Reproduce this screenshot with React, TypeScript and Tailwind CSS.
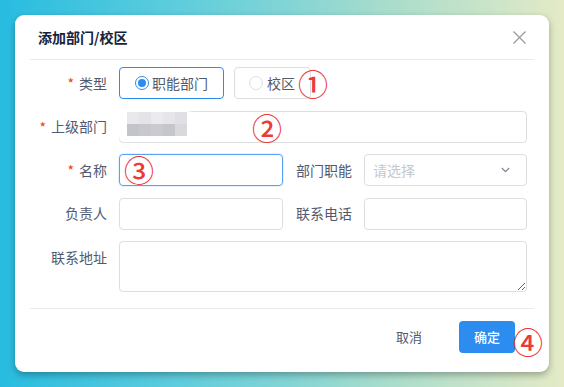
import React from "react";

const FONT = '"Noto Sans CJK SC", "Noto Sans", sans-serif';

function Label({ text, required, w }: { text: string; required?: boolean; w: string }) {
  return (
    <div className={`${w} h-8 flex items-center justify-end pr-3 text-[14px] text-[#515a6e]`}>
      {required && <span className="text-[#ed4014] text-[14px] mr-[5px] leading-none">*</span>}
      <span>{text}</span>
    </div>
  );
}

function Mark({ ch, className }: { ch: string; className: string }) {
  return (
    <span
      className={`absolute w-[30px] h-[30px] flex items-center justify-center text-[30px] font-medium leading-none text-[#ec3a3a] ${className}`}
    >
      {ch}
    </span>
  );
}

export default function App() {
  return (
    <div
      className="relative w-[564px] h-[387px] overflow-hidden pt-[15px] pl-[15px] bg-[linear-gradient(90deg,#28bce1_0%,#5fcddc_32%,#80d4d6_50%,#a5dccc_67%,#e4eac6_100%)]"
      style={{ fontFamily: FONT }}
    >
      <div className="w-[534px] h-[357px] bg-white rounded-[9px] shadow-[0_3px_7px_rgba(0,0,0,0.3)] flex flex-col">
        {/* header */}
        <div className="h-[44px] flex items-center justify-between pl-[23px] pr-[23px]">
          <span className="text-[14px] font-bold text-[#17233d]">添加部门/校区</span>
          <svg width="13" height="13" viewBox="0 0 13 13">
            <path d="M0.5 0.5 L12.5 12.5 M12.5 0.5 L0.5 12.5" stroke="#999999" strokeWidth="1.2" />
          </svg>
        </div>
        <div className="mx-[15px] border-b border-[#e8eaec]" />

        {/* form */}
        <div className="pl-[15px] pt-[7px] pb-[16px] flex flex-col gap-[11.5px]">
          <div className="flex">
            <Label text="类型" required w="w-[89px]" />
            <div className="flex gap-[10px]">
              <div className="h-8 pl-[15px] pr-[15px] border border-[#2d8cf0] rounded flex items-center gap-[3px] text-[14px] text-[#515a6e]">
                <span className="w-[14px] h-[14px] rounded-full border border-[#2d8cf0] flex items-center justify-center">
                  <span className="w-[8px] h-[8px] rounded-full bg-[#2d8cf0]" />
                </span>
                <span>职能部门</span>
              </div>
              <div className="h-8 pl-[14px] pr-[15px] border border-[#dcdee2] rounded flex items-center gap-[4px] text-[14px] text-[#515a6e]">
                <span className="w-[14px] h-[14px] rounded-full border border-[#dcdee2] bg-white" />
                <span>校区</span>
              </div>
            </div>
          </div>

          <div className="flex">
            <Label text="上级部门" required w="w-[89px]" />
            <div className="w-[408px] h-8 border border-[#dcdee2] rounded" />
          </div>

          <div className="grid grid-cols-[89px_164px_81px_163px]">
            <Label text="名称" required w="w-[89px]" />
            <div className="h-8 border border-[#57a3f3] rounded shadow-[0_0_0_1px_rgba(45,140,240,0.12)]" />
            <Label text="部门职能" w="w-[81px]" />
            <div className="h-8 border border-[#dcdee2] rounded flex items-center justify-between pl-[8px] pr-[16px]">
              <span className="text-[14px] text-[#c5c8ce]">请选择</span>
              <svg width="9" height="6" viewBox="0 0 9 6">
                <path d="M0.8 1 L4.5 4.6 L8.2 1" stroke="#808695" strokeWidth="1.2" fill="none" />
              </svg>
            </div>
          </div>

          <div className="grid grid-cols-[89px_164px_81px_163px]">
            <Label text="负责人" w="w-[89px]" />
            <div className="h-8 border border-[#dcdee2] rounded" />
            <Label text="联系电话" w="w-[81px]" />
            <div className="h-8 border border-[#dcdee2] rounded" />
          </div>

          <div className="flex">
            <Label text="联系地址" w="w-[89px]" />
            <textarea className="w-[408px] h-[51px] border border-[#dcdee2] rounded outline-none resize" />
          </div>
        </div>

        <div className="mx-[15px] border-b border-[#e8eaec]" />

        {/* footer */}
        <div className="flex justify-end pt-[12px] pr-[34px] gap-[22px]">
          <div className="w-[56px] h-8 flex items-center justify-center text-[13px] text-[#515a6e]">取消</div>
          <div className="w-[56px] h-8 flex items-center justify-center rounded bg-[#2d8cf0] text-[13px] font-medium text-white">
            确定
          </div>
        </div>
      </div>

      {/* blurred redaction */}
      <div className="absolute left-[113px] top-[108px] w-[82px] h-[33px] rounded-[14px] bg-white blur-[1.5px]" />
      <div className="absolute left-[127px] top-[112px] w-[60px] h-[24px] grid grid-cols-5 grid-rows-2 blur-[0.6px]">
        <span className="bg-[#e9e9ed]" />
        <span className="bg-[#e4e4e8]" />
        <span className="bg-[#ebebee]" />
        <span className="bg-[#e6e6ea]" />
        <span className="bg-[#e0e0e4]" />
        <span className="bg-[#c3c3cb]" />
        <span className="bg-[#c7c7ce]" />
        <span className="bg-[#cacad0]" />
        <span className="bg-[#c5c5cc]" />
        <span className="bg-[#d9d9dd]" />
      </div>

      <Mark ch="①" className="left-[298px] top-[68px]" />
      <Mark ch="②" className="left-[252px] top-[112px]" />
      <Mark ch="③" className="left-[124px] top-[154px]" />
      <Mark ch="④" className="left-[513px] top-[326px]" />
    </div>
  );
}
